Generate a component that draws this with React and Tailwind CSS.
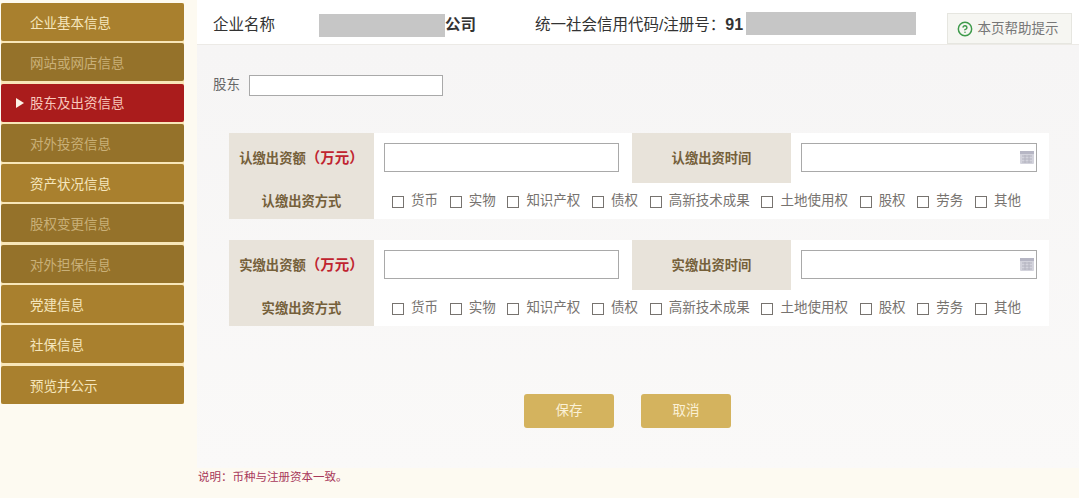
import { CircleHelp } from "lucide-react";

const menu = [
  { label: "企业基本信息", tone: "light" },
  { label: "网站或网店信息", tone: "muted" },
  { label: "股东及出资信息", tone: "active" },
  { label: "对外投资信息", tone: "muted" },
  { label: "资产状况信息", tone: "light" },
  { label: "股权变更信息", tone: "muted" },
  { label: "对外担保信息", tone: "muted" },
  { label: "党建信息", tone: "light" },
  { label: "社保信息", tone: "light" },
  { label: "预览并公示", tone: "light" },
];

const methods = ["货币", "实物", "知识产权", "债权", "高新技术成果", "土地使用权", "股权", "劳务", "其他"];

function MenuItem({ label, tone }) {
  if (tone === "active") {
    return (
      <div className="flex h-[38px] items-center rounded-[2px] bg-[#aa1c1c] pl-[15px] pt-[4px] text-[13.5px] text-[#f8c8bc]">
        <span className="mb-[4px] mr-[6px] h-0 w-0 border-y-[5px] border-l-[8px] border-y-transparent border-l-[#fdf3e6]" />
        {label}
      </div>
    );
  }
  return (
    <div
      className={`flex h-[38px] items-center rounded-[2px] pl-[29px] pt-[4px] text-[13.5px] ${
        tone === "muted" ? "bg-[#95722a] text-[#c9b078]" : "bg-[#a9802e] text-[#f5e6bd]"
      }`}
    >
      {label}
    </div>
  );
}

function Label({ children, money }) {
  return (
    <div className="flex items-center justify-center bg-[#e8e3da] pt-[1px] text-[13.3px] font-bold text-[#75603a]">
      {children}
      {money && <span className="text-[14.5px] text-[#c0242f]">（万元）</span>}
    </div>
  );
}

function TextBox({ date }) {
  return (
    <div className="relative h-[29px] border border-[#a9a9a9] bg-white">
      {date && (
        <svg className="absolute right-[2px] top-[7px]" width="14" height="13" viewBox="0 0 14 13">
          <rect width="14" height="13" rx="1" fill="#d3d3dc" />
          <rect width="14" height="3" fill="#b6b6c4" />
          <path d="M2 5h10M2 8h10M2 11h10M5 4v8M9 4v8" stroke="#b4b4c0" strokeWidth="1" />
        </svg>
      )}
    </div>
  );
}

function Methods() {
  return (
    <div className="col-span-3 flex items-center gap-[11.7px] bg-white pl-[18px] pt-[1px] text-[13.5px] text-[#77736f]">
      {methods.map((m) => (
        <div key={m} className="flex items-center gap-[7px]">
          <span className="h-[12px] w-[12px] border border-[#77736f] bg-white" />
          {m}
        </div>
      ))}
    </div>
  );
}

function CapitalTable({ prefix }) {
  return (
    <div className="grid w-[820px] grid-cols-[145px_258px_159px_258px] grid-rows-[50px_36px]">
      <Label money>{prefix}出资额</Label>
      <div className="bg-white pl-[10px] pr-[13px] pt-[10px]">
        <TextBox />
      </div>
      <Label>{prefix}出资时间</Label>
      <div className="bg-white pl-[10px] pr-[12px] pt-[10px]">
        <TextBox date />
      </div>
      <Label>{prefix}出资方式</Label>
      <Methods />
    </div>
  );
}

export default function App() {
  return (
    <div
      className="flex h-[498px] w-[1079px] overflow-hidden bg-[#fdfaf1] text-[#333]"
      style={{ fontFamily: '"Liberation Sans", "Noto Sans CJK SC", sans-serif' }}
    >
      <aside className="w-[184px] shrink-0 pl-[1px] pt-[3px]">
        <div className="flex flex-col gap-[2.3px] bg-[#f8e6b8]">
          {menu.map((item) => (
            <MenuItem key={item.label} {...item} />
          ))}
        </div>
      </aside>

      <main className="ml-[13px] flex flex-1 flex-col">
        <header className="flex h-[45px] items-start border-b border-[#eceae6] bg-white text-[15.5px] leading-[24px]">
          <span className="ml-[16px] mt-[13px] w-[106px]">企业名称</span>
          <div className="mt-[14px] h-[23px] w-[126px] bg-[#c6c6c6]" />
          <span className="mt-[13px] w-[90px] font-bold">公司</span>
          <span className="mt-[13px] w-[211px]">
            统一社会信用代码/注册号：<b className="text-[16px]">91</b>
          </span>
          <div className="mt-[12px] h-[23px] w-[170px] bg-[#c6c6c6]" />
          <div className="ml-[31px] mt-[13px] flex h-[31px] w-[125px] items-center justify-center gap-[5px] border border-[#e6e6e0] bg-[#f6f6f2] pr-[4px] pt-[1px] text-[13.5px] text-[#777]">
            <CircleHelp size={16} strokeWidth={2.2} className="text-[#3d9a4a]" />
            本页帮助提示
          </div>
        </header>

        <div className="flex flex-1 flex-col bg-gradient-to-b from-[#f6f5f5] to-[#faf9f8] pl-[16px]">
          <div className="mt-[30px] flex items-center gap-[9px] text-[13.5px] text-[#666]">
            股东
            <div className="h-[21px] w-[194px] border border-[#a9a9a9] bg-white" />
          </div>

          <div className="ml-[16px] mt-[37px] flex flex-col gap-[21px]">
            <CapitalTable prefix="认缴" />
            <CapitalTable prefix="实缴" />
          </div>

          <div className="ml-[311px] mt-[68px] flex gap-[27px]">
            <button className="h-[34px] w-[90px] rounded-[3px] bg-[#d4b35e] text-[13.5px] text-[#fbf1d6]">保存</button>
            <button className="h-[34px] w-[90px] rounded-[3px] bg-[#d4b35e] text-[13.5px] text-[#fbf1d6]">取消</button>
          </div>
        </div>

        <p className="h-[30px] bg-[#fdfaf1] pl-[1px] text-[11.5px] leading-[18px] text-[#a8385a]">说明：币种与注册资本一致。</p>
      </main>
    </div>
  );
}
